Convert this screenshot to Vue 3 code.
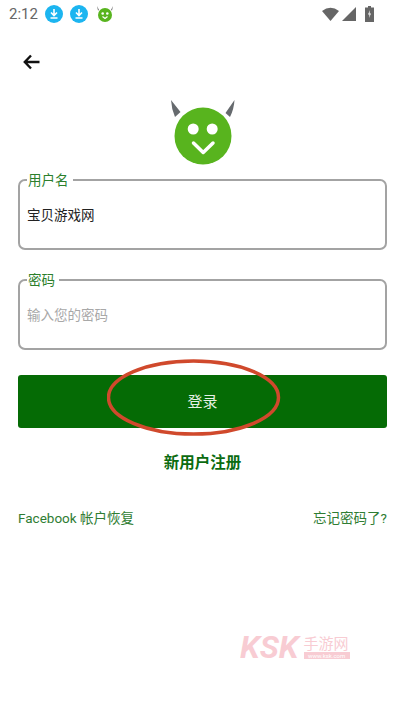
<template>
  <div class="login-page">
    <div class="status-bar">
      <span class="time">2:12</span>
      <svg v-for="n in 2" :key="n" class="dl-icon" viewBox="0 0 18 18">
        <circle cx="9" cy="9" r="9" fill="#1cb5f0" />
        <path d="M9 4v6M6 7.500 9 10.500 12 7.500M5.500 13h7" fill="none" stroke="#fff" stroke-width="1.600" />
      </svg>
      <svg class="mini-logo" viewBox="0 0 18 18">
        <path d="M1 1 3 5 2 5.500ZM17 1 15 5 16 5.500Z" fill="#666" />
        <circle cx="9" cy="10" r="7" fill="#58b41e" />
        <circle cx="6.700" cy="8.500" r="1.300" fill="#fff" />
        <circle cx="11.300" cy="8.500" r="1.300" fill="#fff" />
        <path d="M6.500 11.500 9 13.500 11.500 11.500" fill="none" stroke="#fff" stroke-width="1.200" />
      </svg>
      <div class="status-right">
        <svg width="17" height="14" viewBox="0 0 17 14"><path d="M0 4Q8.500-2.500 17 4L8.500 14Z" fill="#666" /></svg>
        <svg width="14" height="14" viewBox="0 0 14 14"><path d="M14 0V14H0Z" fill="#666" /></svg>
        <svg class="battery" width="9" height="16" viewBox="0 0 9 16">
          <path d="M3 0H6V1.500H9V16H0V1.500H3Z" fill="#666" />
          <path d="M5 4 3 8.500H4.500L4 12 6 7.500H4.500Z" fill="#fff" />
        </svg>
      </div>
    </div>

    <div class="toolbar">
      <svg width="17" height="16" viewBox="0 0 17 16">
        <path d="M8 1.500 1.800 8 8 14.500M2 8H16.500" fill="none" stroke="#111" stroke-width="2.400" />
      </svg>
    </div>

    <div class="logo">
      <svg width="68" height="70" viewBox="0 0 68 70">
        <path d="M2 2 11.500 14 6 19Q2.500 11 2 2ZM65.500 2 56.500 15 61 19Q65 11 65.500 2Z" fill="#666a6e" />
        <circle cx="34" cy="38" r="28.500" fill="#58b41e" />
        <circle cx="24.200" cy="31" r="5.500" fill="#fff" />
        <circle cx="43.200" cy="31" r="5.500" fill="#fff" />
        <path d="M24.500 45 34.200 54.500 44 45" fill="none" stroke="#fff" stroke-width="3.500" stroke-linecap="round" stroke-linejoin="round" />
      </svg>
    </div>

    <form class="login-form" @submit.prevent>
      <fieldset class="field">
        <legend>用户名</legend>
        <input class="user-input" type="text" v-model="username" />
      </fieldset>
      <fieldset class="field second">
        <legend>密码</legend>
        <input type="password" v-model="password" placeholder="输入您的密码" />
      </fieldset>

      <div class="submit-wrap">
        <button class="btn-login" type="submit">登录</button>
        <svg class="circle-mark" width="176" height="80" viewBox="0 0 176 80">
          <ellipse cx="86.500" cy="38.500" rx="85" ry="36.500" fill="none" stroke="#d0492c" stroke-width="3.500" />
        </svg>
      </div>
    </form>

    <div class="register">新用户注册</div>

    <div class="links">
      <span>Facebook 帐户恢复</span>
      <span>忘记密码了?</span>
    </div>

    <div class="watermark">
      <span class="wm-ksk">KSK</span>
      <div class="wm-side">
        <span class="wm-title">手游网</span>
        <span class="wm-url">www.ksk.com</span>
      </div>
    </div>
  </div>
</template>

<script setup>
import { ref } from 'vue'

const username = ref('宝贝游戏网')
const password = ref('')
</script>

<style scoped>
.login-page {
  position: relative;
  width: 405px;
  height: 720px;
  overflow: hidden;
  background: #fff;
  font-family: Roboto, "Noto Sans CJK SC", sans-serif;
}

.status-bar {
  display: flex;
  align-items: center;
  height: 28px;
  padding: 0 31px 0 9px;
  box-sizing: border-box;
}

.time {
  font-size: 15px;
  color: #666;
  margin-right: 7px;
}

.dl-icon {
  width: 18px;
  height: 18px;
  margin-right: 7px;
}

.mini-logo {
  width: 18px;
  height: 18px;
  margin-left: 1px;
}

.status-right {
  display: flex;
  align-items: center;
  gap: 3px;
  margin-left: auto;
}

.battery {
  margin-left: 6px;
}

.toolbar {
  display: flex;
  align-items: center;
  height: 68px;
  padding: 0 23px;
  margin-bottom: 2px;
}

.logo {
  display: flex;
  justify-content: center;
  height: 70px;
}

.login-form {
  padding: 0 18px;
  margin-top: 3px;
}

.field {
  height: 79px;
  margin: 0;
  padding: 0 7px;
  box-sizing: border-box;
  border: 2px solid #a3a3a3;
  border-radius: 7px;
}

.field.second {
  margin-top: 21px;
}

.field legend {
  padding: 0 4px 0 1px;
  font-size: 13.500px;
  line-height: 18px;
  color: #2c7f2c;
}

.field input {
  display: block;
  width: 100%;
  height: 51px;
  padding: 0;
  border: none;
  outline: none;
  background: transparent;
  font-family: inherit;
  font-size: 13.500px;
  color: #222;
}

.field input.user-input {
  height: 49px;
}

.field input::placeholder {
  color: #a8a8a8;
}

.submit-wrap {
  position: relative;
  margin-top: 25px;
}

.btn-login {
  display: block;
  width: 100%;
  height: 53px;
  padding: 0 0 2px;
  border: none;
  border-radius: 3px;
  background: #056b05;
  color: #e6f0e6;
  font-family: inherit;
  font-size: 15px;
}

.circle-mark {
  position: absolute;
  left: 89px;
  top: -16px;
  pointer-events: none;
}

.register {
  margin-top: 25px;
  text-align: center;
  font-size: 15.500px;
  line-height: 20px;
  font-weight: 700;
  color: #0b6b10;
}

.links {
  display: flex;
  justify-content: space-between;
  margin-top: 35px;
  padding: 0 18px;
  font-size: 13.500px;
  line-height: 20px;
  color: #2f7d33;
}

.watermark {
  position: absolute;
  left: 240px;
  top: 635px;
  display: flex;
  align-items: center;
  gap: 5px;
  opacity: 0.5;
  color: #f39aa8;
}

.wm-ksk {
  font-size: 32px;
  line-height: 24px;
  font-weight: 700;
  font-style: italic;
}

.wm-side {
  display: flex;
  flex-direction: column;
  width: 46px;
}

.wm-title {
  font-size: 15px;
  line-height: 16px;
}

.wm-url {
  background: #f39aa8;
  color: #fff;
  font-size: 6px;
  line-height: 7px;
  text-align: center;
  white-space: nowrap;
  overflow: hidden;
}
</style>
